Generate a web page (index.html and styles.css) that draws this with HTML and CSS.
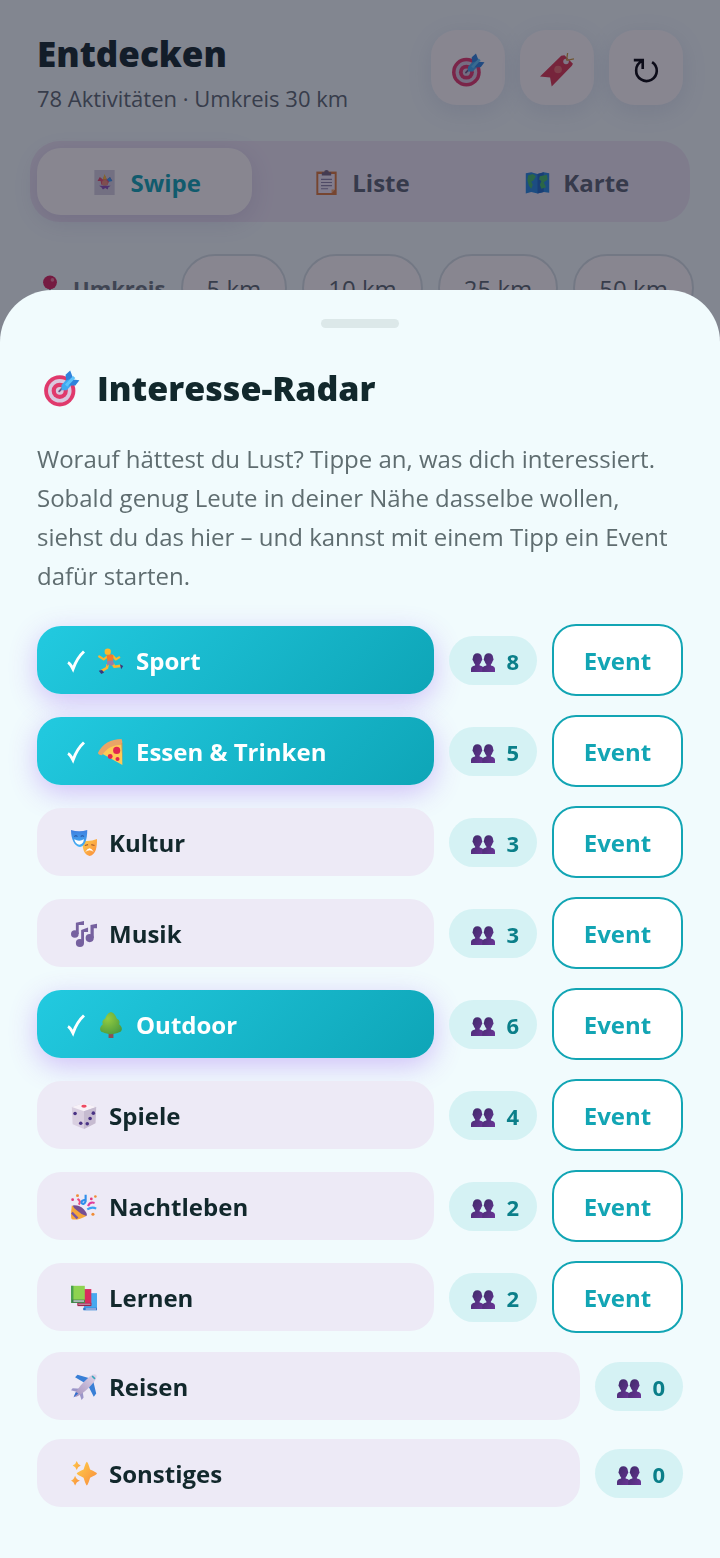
FILE: index.html
```html
<!DOCTYPE html>
<html lang="de">
<head>
<meta charset="utf-8">
<meta name="viewport" content="width=device-width, initial-scale=1">
<title>Entdecken</title>
<link rel="stylesheet" href="styles.css">
</head>
<body>
<svg class="sprite" aria-hidden="true">
  <defs>
    <linearGradient id="g-people" x1="0" y1="0" x2="1" y2="1"><stop offset="0" stop-color="#3d2a66"/><stop offset="1" stop-color="#6b3598"/></linearGradient>
    <linearGradient id="g-gold" x1="0" y1="0" x2="1" y2="1"><stop offset="0" stop-color="#ffcf4a"/><stop offset="1" stop-color="#f98a3c"/></linearGradient>
    <linearGradient id="g-blue" x1="0" y1="0" x2="0" y2="1"><stop offset="0" stop-color="#3f7fe0"/><stop offset="1" stop-color="#45b2f5"/></linearGradient>
    <radialGradient id="g-tree" cx=".35" cy=".3" r=".8"><stop offset="0" stop-color="#94cc40"/><stop offset="1" stop-color="#4a9a3e"/></radialGradient>
    <linearGradient id="g-plane" x1="1" y1="0" x2="0" y2="1"><stop offset="0" stop-color="#e0d6ea"/><stop offset="1" stop-color="#a391bd"/></linearGradient>
  </defs>
  <symbol id="i-target" viewBox="0 0 32 32">
    <circle cx="14.5" cy="18" r="13.5" fill="#e0396c"/><circle cx="14.5" cy="18" r="10.2" fill="#d9c8df"/><circle cx="14.5" cy="18" r="7" fill="#e0396c"/><circle cx="14.5" cy="18" r="3.4" fill="#d9c8df"/>
    <path d="M14 18.500 20 12" stroke="#6b5a86" stroke-width="1.600" stroke-linecap="round"/>
    <path d="M16 13 22 6.500 27 10.500 20.500 17.500 16 17.500z" fill="#3fa9f0"/>
    <path d="M20 9 19.500 4 23.500.500 26 7zM24 8 31.500 8.800 28 13.500 22.500 13.500z" fill="#2f83dc"/><path d="M20 13.500 27 6" stroke="#5cc3fb" stroke-width="2.600"/>
  </symbol>
  <symbol id="i-bookmark" viewBox="0 0 32 32">
    <path d="M20 2.500 23 2 31 10 30 12 11 31.500 9.500 23 0 22z" fill="#d93651"/>
    <circle cx="24.500" cy="8" r="2.600" fill="#eadfe8"/><path d="M25 7 26 0M25 7 32 5.500" stroke="#c9973c" stroke-width="1.200" fill="none"/>
    <circle cx="17" cy="15.500" r="3.600" fill="#ee7f7a" opacity=".75"/>
  </symbol>
  <symbol id="i-reload" viewBox="0 0 32 32"><path d="M3 5.500H12.500V15M12.500 6 C8 8 5.500 12 5.500 16.500A11 11 0 1 0 22.500 7.500" fill="none" stroke="#05060c" stroke-width="2.800"/></symbol>
  <symbol id="i-joker" viewBox="0 0 32 32">
    <path d="M3 0h26v32H3z" fill="#d3cfdf"/>
    <path d="M7 14 10 9 14 12 16 6 19 12 23 9 26 14 22 14 20 19H12L11 14z" fill="#e04c6c"/><path d="M14 12 16 5 19 12z" fill="#f6bd37"/><path d="M19 12 23 9 26 14 22 15z" fill="#389cf0"/><circle cx="16.500" cy="16.500" r="3.800" fill="#e88a7a"/><path d="M9 20H24L21 22 20 25 17 23 14 25 12 22z" fill="#8b50b8"/>
  </symbol>
  <symbol id="i-clipboard" viewBox="0 0 32 32">
    <path d="M3 2h26v30H3z" fill="#d9793b"/><path d="M5.500 5h21v20l-4 4.500h-17z" fill="#eee7f5"/><path d="M10 3h3a3 3 0 0 1 6 0h3v4H10z" fill="#75647f"/><path d="M22.500 29.500v-4.500h4z" fill="#f3a160"/><path d="M9 12h14M9 16h14M9 20h14M9 24h9" stroke="#8a83a6" stroke-width="1.300"/>
  </symbol>
  <symbol id="i-map" viewBox="0 0 32 32">
    <path d="M1 4 8 3 16 5 24 3 31 4V29L24 28 16 30 8 28 1 30z" fill="#2489de"/><path d="M16 5 24 3V28L16 30z" fill="#1c6bc5"/>
    <path d="M4 7 10 5 14 8 11 13 8 15 10 19 8 24 5 20 3 13zM19 8 28 6 29 12 24 16 27 22 21 24 19 19 21 14 18 12z" fill="#42ba68"/>
  </symbol>
  <symbol id="i-pin" viewBox="0 0 32 32"><path d="M14.800 16h2.400V31h-2.400z" fill="#8d8299"/><circle cx="16" cy="9" r="8.500" fill="#d6245c"/><circle cx="19" cy="6" r="2.200" fill="#f07d9c"/></symbol>
  <symbol id="i-check" viewBox="0 0 20 24"><path d="M2 13.500 C4 14.500 5.500 17 7 20 C9.500 13 13 7 18 2.500" fill="none" stroke="#fff" stroke-width="3"/></symbol>
  <symbol id="i-run" viewBox="0 0 32 32">
    <path d="M11 11 7 14 1.500 10.500M18 9.500 22 14 26 11.500" fill="none" stroke="#fbb72f" stroke-width="2.800" stroke-linecap="round" stroke-linejoin="round"/>
    <path d="M12 20 11 24.500 4 28.500M18 19 20 23 28 22" fill="none" stroke="#fbb72f" stroke-width="3.200" stroke-linejoin="round"/>
    <path d="M10.500 8.500Q15 6.500 19 9L18.500 19H12z" fill="#f47a2d"/><path d="M11.500 16 18 15 20 20 16 22 14 20 11 22z" fill="#9a7fa8"/>
    <path d="M27 20 31 22 28.500 26zM5 27 1 28 4 32 7.500 30z" fill="#39377d"/><circle cx="12" cy="4.500" r="3.900" fill="#fcb92e"/>
  </symbol>
  <symbol id="i-pizza" viewBox="0 0 32 32">
    <path d="M3 17 C8 7 17 2 29 2 L30 32z" fill="#ffca55"/><path d="M0 17 C5 6 16 0 29 0 Q31 4 29 7 C18 7 10 12 5 20 Q0 20 0 17z" fill="#e9a567"/>
    <circle cx="23" cy="14" r="4.400" fill="#e2284f"/><circle cx="15" cy="21.500" r="3" fill="#e2284f"/><circle cx="24" cy="24.500" r="2.500" fill="#e2284f"/><path d="M29 5h1V31z" fill="#e98c38"/>
  </symbol>
  <symbol id="i-masks" viewBox="0 0 32 32">
    <path d="M14 13 Q23 15 32 11 C32 21 31 30 23 32 C16 31 14 23 14 13z" fill="url(#g-gold)"/><path d="M17.500 27Q23 18 28 27Q23 23 17.500 27z" fill="#fff"/><path d="M17 19l4-1M25 18l4 1" stroke="#a95d2f" stroke-width="1.300"/>
    <path d="M0 0Q10 3 20 0C20 12 17 20 11 21C4 20 0 11 0 0z" fill="url(#g-blue)"/><path d="M4 11.500Q10 15 16 11.500Q15 18 10 18Q5 17 4 11.500z" fill="#fff"/><path d="M4 8q2-2 4 0M12 8q2-2 4 0" stroke="#244f9a" stroke-width="1.300" fill="none"/>
  </symbol>
  <symbol id="i-music" viewBox="0 0 32 32"><g fill="#76619f"><circle cx="4.700" cy="16" r="4.700"/><path d="M6 2 16 0V5H9.500V16H6z"/><circle cx="11" cy="27" r="5"/><path d="M12.500 11 21 8V13.500H16V27H12.500z"/><circle cx="23" cy="21" r="5"/><path d="M24 5 32 3.500V9H28V21H24z"/></g></symbol>
  <symbol id="i-tree" viewBox="0 0 32 32"><path d="M13 23h6V32h-6z" fill="#8c5052"/><path d="M16 0C20 1 22 5 23 8C27 10 27 13 26 15C31 19 30 24 26 25C21 28 11 28 6 25C2 24 1 19 6 15C5 13 5 10 9 8C10 5 12 1 16 0z" fill="url(#g-tree)"/></symbol>
  <symbol id="i-dice" viewBox="0 0 32 32">
    <path d="M16 0 31 5 30 25 16 32 2 26 1 5z" fill="#d9cfe0"/><path d="M16 0 31 5 16 10 1 5z" fill="#f7f2f8"/><path d="M31 5 16 10 16 32 30 25z" fill="#c6bbd0"/>
    <ellipse cx="16" cy="4" rx="3.300" ry="1.800" fill="#ee4b62"/><g fill="#4a3385"><circle cx="5" cy="13" r="2.200"/><circle cx="12" cy="25" r="2.200"/><circle cx="27.500" cy="12.500" r="2.200"/><circle cx="23.500" cy="19" r="2.200"/><circle cx="20" cy="25.500" r="2.200"/></g>
  </symbol>
  <symbol id="i-party" viewBox="0 0 32 32">
    <path d="M1 31Q-1 29 1 14Q13 18 19 27Q8 33 1 31z" fill="#f5a63a"/><path d="M1 23 8 30" stroke="#7556a5" stroke-width="3"/><path d="M2 14Q10 13 16 19Q21 25 19 27Q12 25 7 20Q3 17 2 14z" fill="#764f93"/>
    <path d="M9.500 13Q13 9 8 6" stroke="#ed4c80" stroke-width="2.500" fill="none"/><path d="M18 1V9Q16 14 13 11Q12 8 18 7" stroke="#2f8feb" stroke-width="2.600" fill="none"/><path d="M21 15Q23 9 29 11" stroke="#df3e9c" stroke-width="2.600" fill="none"/><path d="M20 19Q26 15 31 18" stroke="#3aa2f4" stroke-width="2.600" fill="none"/>
    <g fill="#f08b35"><circle cx="8" cy="2" r="1.800"/><circle cx="27" cy="25" r="1.900"/><circle cx="30" cy="3" r="1.600"/></g><g fill="#e43b7b"><circle cx="2" cy="7" r="1.700"/><circle cx="25" cy="6" r="1.700"/></g>
  </symbol>
  <symbol id="i-books" viewBox="0 0 32 32">
    <path d="M16 10H32V31H16z" fill="#47a9ef"/><path d="M15 28H32V31H15z" fill="#2a72c9"/><path d="M8 5H25V25H8z" fill="#d92d5e"/><path d="M8 22H25V26H8z" fill="#9d264c"/><path d="M9 23h15v1H9zM18 29h13v1H18z" fill="#e5d8ee"/>
    <path d="M0 1H17V22H0z" fill="#8ed351"/><path d="M0 1H3V22H0z" fill="#4aa250"/><path d="M1 18H17V22H1z" fill="#3c7d4b"/><path d="M3 19h13v1.500H3z" fill="#e5d8ee"/>
  </symbol>
  <symbol id="i-plane" viewBox="0 0 32 32">
    <path d="M17 11 5 4 8 1 26 6zM21 14 28 28 31 24 27 7z" fill="#397fd6"/><path d="M8 22 0 20 2 17.500 12 18zM10 23 13 32 15.500 29 14 20z" fill="#9b95c9"/>
    <path d="M4 28C3 26 10 14 23 3Q28-1 31 1Q33 4 28 10C18 22 7 29 4 28z" fill="url(#g-plane)"/><path d="M3 29 9 24 6 22z" fill="#316fcf"/><path d="M26 2.500 29.500 6" stroke="#37a6ba" stroke-width="2"/>
  </symbol>
  <symbol id="i-sparkle" viewBox="0 0 32 32"><g fill="url(#g-gold)"><path d="M19.500 1Q21 2 23.500 10.500Q31.500 14 32 15.500Q31.500 17 23.500 20.500Q21 29 19.500 30Q18 29 15.500 20.500Q7.500 17 7 15.500Q7.500 14 15.500 10.500Q18 2 19.500 1z"/><path d="M7 0Q8 4 12 5.500Q8 7 7 11Q6 7 2 5.500Q6 4 7 0zM5 18Q6.500 23 11 24Q6.500 25.500 5 30Q3.500 25.500 0 24Q3.500 23 5 18z"/></g></symbol>
  <symbol id="i-people" viewBox="0 0 32 25"><g fill="url(#g-people)"><path d="M2.500 6Q3 0 8.500 0T14.500 6Q16 9 14 10.500Q13 14 11.500 15V16.500Q17 17.500 17 21V25H0V21Q0 17.500 5.500 16.500V15Q4 14 3 10.500Q1 9 2.500 6z"/><path d="M17.500 6Q18 0 23.500 0T29.500 6Q31 9 29 10.500Q28 14 26.500 15V16.500Q32 17.500 32 21V25H15V21Q15 17.500 20.500 16.500V15Q19 14 18 10.500Q16 9 17.500 6z"/></g></symbol>
</svg>

<main class="page" inert>
  <header class="head">
    <div>
      <h1 class="title">Entdecken</h1>
      <p class="subtitle">78 Aktivitäten · Umkreis 30 km</p>
    </div>
    <div class="actions">
      <button class="tool" aria-label="Interesse-Radar"><svg class="tool-icon"><use href="#i-target"/></svg></button>
      <button class="tool" aria-label="Gemerkt"><svg class="tool-icon"><use href="#i-bookmark"/></svg></button>
      <button class="tool" aria-label="Neu laden"><svg class="reload"><use href="#i-reload"/></svg></button>
    </div>
  </header>
  <nav class="tabs" aria-label="Ansicht">
    <button class="tab active"><svg class="tab-icon"><use href="#i-joker"/></svg>Swipe</button>
    <button class="tab"><svg class="tab-icon"><use href="#i-clipboard"/></svg>Liste</button>
    <button class="tab"><svg class="tab-icon"><use href="#i-map"/></svg>Karte</button>
  </nav>
  <div class="radius">
    <span class="radius-label"><svg class="icon"><use href="#i-pin"/></svg>Umkreis</span>
    <button class="distance">5 km</button>
    <button class="distance">10 km</button>
    <button class="distance">25 km</button>
    <button class="distance">50 km</button>
  </div>
</main>

<div class="backdrop"></div>

<section class="sheet" role="dialog" aria-modal="true" aria-labelledby="radar-title">
  <div class="grip"></div>
  <h2 class="sheet-title" id="radar-title"><svg class="title-icon" aria-hidden="true"><use href="#i-target"/></svg>Interesse-Radar</h2>
  <p class="intro">Worauf hättest du Lust? Tippe an, was dich interessiert. Sobald genug Leute in deiner Nähe dasselbe wollen, siehst du das hier – und kannst mit einem Tipp ein Event dafür starten.</p>
  <ul class="interests">
    <li class="row"><button class="chip on" aria-pressed="true"><svg class="check"><use href="#i-check"/></svg><svg class="icon"><use href="#i-run"/></svg>Sport</button><span class="count"><svg class="people"><use href="#i-people"/></svg>8</span><button class="event">Event</button></li>
    <li class="row"><button class="chip on" aria-pressed="true"><svg class="check"><use href="#i-check"/></svg><svg class="icon"><use href="#i-pizza"/></svg>Essen &amp; Trinken</button><span class="count"><svg class="people"><use href="#i-people"/></svg>5</span><button class="event">Event</button></li>
    <li class="row"><button class="chip" aria-pressed="false"><svg class="icon"><use href="#i-masks"/></svg>Kultur</button><span class="count"><svg class="people"><use href="#i-people"/></svg>3</span><button class="event">Event</button></li>
    <li class="row"><button class="chip" aria-pressed="false"><svg class="icon"><use href="#i-music"/></svg>Musik</button><span class="count"><svg class="people"><use href="#i-people"/></svg>3</span><button class="event">Event</button></li>
    <li class="row"><button class="chip on" aria-pressed="true"><svg class="check"><use href="#i-check"/></svg><svg class="icon"><use href="#i-tree"/></svg>Outdoor</button><span class="count"><svg class="people"><use href="#i-people"/></svg>6</span><button class="event">Event</button></li>
    <li class="row"><button class="chip" aria-pressed="false"><svg class="icon"><use href="#i-dice"/></svg>Spiele</button><span class="count"><svg class="people"><use href="#i-people"/></svg>4</span><button class="event">Event</button></li>
    <li class="row"><button class="chip" aria-pressed="false"><svg class="icon"><use href="#i-party"/></svg>Nachtleben</button><span class="count"><svg class="people"><use href="#i-people"/></svg>2</span><button class="event">Event</button></li>
    <li class="row"><button class="chip" aria-pressed="false"><svg class="icon"><use href="#i-books"/></svg>Lernen</button><span class="count"><svg class="people"><use href="#i-people"/></svg>2</span><button class="event">Event</button></li>
    <li class="row"><button class="chip" aria-pressed="false"><svg class="icon"><use href="#i-plane"/></svg>Reisen</button><span class="count"><svg class="people"><use href="#i-people"/></svg>0</span></li>
    <li class="row"><button class="chip" aria-pressed="false"><svg class="icon"><use href="#i-sparkle"/></svg>Sonstiges</button><span class="count"><svg class="people"><use href="#i-people"/></svg>0</span></li>
  </ul>
</section>
</body>
</html>
```
FILE: styles.css
```css
* { box-sizing: border-box; }
body {
  margin: 0;
  min-height: 100vh;
  background: #f0fafb;
  color: #12282c;
  font-family: "Segoe UI", "Open Sans", "Noto Sans", sans-serif;
}
h1, h2, p, ul { margin: 0; padding: 0; }
ul { list-style: none; }
button { font: inherit; color: inherit; border: 0; padding: 0; cursor: pointer; }
svg { display: block; flex: none; }
.sprite { position: absolute; width: 0; height: 0; }
.icon { width: 26px; height: 26px; }

.page { padding: 30px 30px 0; }
.head {
  display: flex;
  justify-content: space-between;
  align-items: center;
  padding: 0 7px;
}
.title { font-size: 35px; line-height: 48px; font-weight: 800; }
.subtitle { font-size: 22px; line-height: 30px; padding-top: 5px; height: 44px; color: #5b6870; }
.actions { display: flex; gap: 15px; align-self: flex-start; }
.tool {
  display: grid;
  place-items: center;
  width: 74px;
  height: 75px;
  padding-top: 4px;
  border-radius: 26px;
  background: #fdfbfb;
  box-shadow: 0 6px 24px rgba(80, 90, 160, .13);
}
.tool-icon { width: 34px; height: 34px; }
.reload { width: 30px; height: 30px; }

.tabs {
  display: grid;
  grid-template-columns: repeat(3, 1fr);
  margin-top: 19px;
  padding: 7px;
  border-radius: 30px;
  background: #ebe6f3;
}
.tab {
  display: flex;
  align-items: center;
  justify-content: center;
  gap: 13px;
  height: 67px;
  padding: 2px 0 0 4px;
  border-radius: 24px;
  background: transparent;
  color: #586370;
  font-size: 24px;
  font-weight: 700;
}
.tab-icon { width: 25px; height: 25px; }
.tab.active {
  background: #fdfbfb;
  color: #0ea5b5;
  box-shadow: 0 6px 24px rgba(80, 60, 150, .14);
}
.radius {
  display: flex;
  align-items: center;
  gap: 15px;
  margin-top: 32px;
}
.radius-label {
  display: flex;
  align-items: center;
  gap: 10px;
  flex: 1;
  padding-left: 7px;
  color: #6c7980;
  font-size: 22px;
  font-weight: 700;
}
.distance {
  flex: none;
  height: 68px;
  padding: 0 24px;
  border: 2px solid #d3dfe3;
  border-radius: 34px;
  background: #fdfbfb;
  color: #5b6870;
  font-size: 24px;
  font-weight: 500;
  white-space: nowrap;
}

.backdrop { position: fixed; inset: 0; background: rgba(20, 18, 38, .5); }

.sheet {
  position: absolute;
  left: 0;
  right: 0;
  bottom: 0;
  padding: 29px 37px 51px;
  border-radius: 52px 52px 0 0;
  background: #f1fbfd;
}
.grip { width: 78px; height: 9px; margin: 0 auto; border-radius: 5px; background: #dce8e9; }
.sheet-title {
  display: flex;
  align-items: center;
  gap: 17px;
  margin-top: 35px;
  padding-left: 6px;
  font-size: 34px;
  line-height: 50px;
  font-weight: 800;
}
.title-icon { width: 37px; height: 37px; }
.intro { margin-top: 26px; color: #5f6d70; font-size: 24px; line-height: 39px; }
.interests { display: flex; flex-direction: column; gap: 19px; margin-top: 29px; }
.row { display: flex; align-items: center; gap: 15px; }
.chip {
  display: flex;
  align-items: center;
  flex: 1;
  gap: 12px;
  height: 68px;
  padding: 1px 34px 0;
  border-radius: 24px;
  background: #edeaf6;
  font-size: 24px;
  font-weight: 700;
  text-align: left;
}
.chip.on {
  padding-left: 29px;
  background: linear-gradient(135deg, #22cae0, #0ea5b7);
  color: #fff;
  box-shadow: 0 8px 28px rgba(134, 58, 237, .3);
}
.check { width: 20px; height: 24px; }
.count {
  display: flex;
  align-items: center;
  justify-content: flex-end;
  gap: 11px;
  width: 88px;
  height: 49px;
  padding: 1px 18px 0 0;
  border-radius: 25px;
  background: #d5f2f4;
  color: #0b7f89;
  font-size: 22px;
  font-weight: 700;
}
.people { width: 24px; height: 19px; margin-top: 4px; }
.event {
  width: 131px;
  height: 72px;
  padding-top: 1px;
  border: 2px solid #12a5b4;
  border-radius: 24px;
  background: #fff;
  color: #12a5b4;
  font-size: 24px;
  font-weight: 700;
}
```
